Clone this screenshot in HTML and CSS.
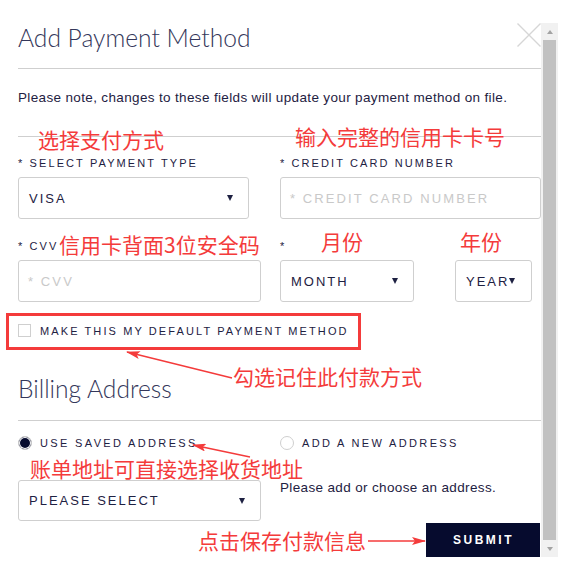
FILE: index.html
```html
<!DOCTYPE html>
<html lang="en">
<head>
<meta charset="utf-8">
<title>Add Payment Method</title>
<link rel="stylesheet" href="styles.css">
</head>
<body>
<div class="page">
  <div class="modal">
    <header class="modal-head">
      <h1 class="title">Add Payment Method</h1>
      <button class="close" aria-label="Close">
        <svg width="24" height="24" viewBox="0 0 24 24"><path d="M0.5 0.5 L23.5 23.5 M23.5 0.5 L0.5 23.5" stroke="#d6d6d6" stroke-width="1.4" fill="none"/></svg>
      </button>
    </header>
    <p class="note">Please note, changes to these fields will update your payment method on file.</p>

    <div class="grid fields">
      <div class="field">
        <div class="label">* SELECT PAYMENT TYPE</div>
        <div class="control select w-type"><span>VISA</span><span class="caret"></span></div>
      </div>
      <div class="field">
        <div class="label">* CREDIT CARD NUMBER</div>
        <div class="control placeholder">* CREDIT CARD NUMBER</div>
      </div>
      <div class="field">
        <div class="label">* CVV</div>
        <div class="control placeholder">* CVV</div>
      </div>
      <div class="field">
        <div class="label">*</div>
        <div class="exp">
          <div class="control select w-month"><span>MONTH</span><span class="caret"></span></div>
          <div class="control select w-year"><span>YEAR</span><span class="caret"></span></div>
        </div>
      </div>
    </div>

    <div class="check-row">
      <span class="checkbox"></span>
      <span class="opt-text">MAKE THIS MY DEFAULT PAYMENT METHOD</span>
    </div>

    <h2 class="title section-title">Billing Address</h2>

    <div class="grid radios">
      <div class="option"><span class="radio on"></span><span class="opt-text">USE SAVED ADDRESS</span></div>
      <div class="option"><span class="radio"></span><span class="opt-text">ADD A NEW ADDRESS</span></div>
    </div>

    <div class="grid address">
      <div class="control select"><span>PLEASE SELECT</span><span class="caret"></span></div>
      <p class="hint">Please add or choose an address.</p>
    </div>

    <div class="actions">
      <button class="submit">SUBMIT</button>
    </div>
  </div>

  <div class="scrollbar">
    <div class="sb-btn"><span class="sb-up"></span></div>
    <div class="sb-thumb"></div>
    <div class="sb-btn"><span class="sb-down"></span></div>
  </div>

  <div class="redbox"></div>
  <svg class="arrows" width="576" height="575" viewBox="0 0 576 575">
    <defs>
      <marker id="head" markerUnits="userSpaceOnUse" markerWidth="14" markerHeight="8" refX="13" refY="4" orient="auto">
        <path d="M0 0 L14 4 L0 8 L3 4 Z" fill="#f43b3b"/>
      </marker>
    </defs>
    <line x1="232" y1="378" x2="127" y2="352" stroke="#f43b3b" stroke-width="1.5" marker-end="url(#head)"/>
    <line x1="250" y1="457" x2="193" y2="445" stroke="#f43b3b" stroke-width="1.5" marker-end="url(#head)"/>
    <line x1="368" y1="541" x2="425" y2="541" stroke="#f43b3b" stroke-width="1.5" marker-end="url(#head)"/>
  </svg>

  <span class="annot a1">选择支付方式</span>
  <span class="annot a2">输入完整的信用卡卡号</span>
  <span class="annot a3">信用卡背面3位安全码</span>
  <span class="annot a4">月份</span>
  <span class="annot a5">年份</span>
  <span class="annot a6">勾选记住此付款方式</span>
  <span class="annot a7">账单地址可直接选择收货地址</span>
  <span class="annot a8">点击保存付款信息</span>
</div>
</body>
</html>
```

FILE: styles.css
```css
* { box-sizing: border-box; }
html, body { margin: 0; background: #fff; }
body {
  font-family: "Liberation Sans", Arial, sans-serif;
  color: #1e2142;
}
.page {
  position: relative;
  display: flex;
  align-items: flex-start;
  width: 576px;
  height: 575px;
  overflow: hidden;
}
.modal {
  width: 541px;
  padding-left: 18px;
}
.modal-head {
  display: flex;
  justify-content: space-between;
  align-items: flex-start;
  height: 69px;
  padding-top: 23px;
  border-bottom: 1px solid #cfcfcf;
}
.title {
  margin: 0;
  font-family: "Lato Light", Lato, "Open Sans", sans-serif;
  font-weight: 300;
  font-size: 24.6px;
  line-height: 30px;
  color: #34375a;
}
.close {
  display: block;
  width: 24px;
  height: 24px;
  padding: 0;
  border: 0;
  background: none;
}
.close svg { display: block; }
.note {
  margin: 0;
  padding: 21px 0 30px;
  font-size: 13.5px;
  letter-spacing: 0.35px;
  line-height: 16px;
  border-bottom: 1px solid #cfcfcf;
}
.grid {
  display: grid;
  grid-template-columns: 243px 261px;
  column-gap: 19px;
}
.fields {
  padding-top: 19px;
  row-gap: 20px;
}
.label {
  font-size: 11px;
  line-height: 14px;
  letter-spacing: 2.1px;
  margin-bottom: 7px;
  white-space: nowrap;
}
.control {
  height: 42px;
  border: 1px solid #cfcfcf;
  border-radius: 3px;
  display: flex;
  align-items: center;
  justify-content: space-between;
  padding: 0 15px 0 10px;
  font-size: 13px;
  letter-spacing: 2px;
  white-space: nowrap;
  background: #fff;
}
.placeholder {
  color: #c9c9c9;
  padding-left: 9px;
  letter-spacing: 2.1px;
}
.w-type { width: 231px; }
.exp {
  display: flex;
  justify-content: space-between;
  width: 252px;
}
.w-month { width: 134px; }
.w-year { width: 77px; padding-right: 0; justify-content: flex-start; }
.caret {
  flex: none;
  width: 0;
  height: 0;
  border-left: 3px solid transparent;
  border-right: 3px solid transparent;
  border-top: 6px solid #1e2142;
}
.check-row {
  display: flex;
  align-items: center;
  gap: 9px;
  height: 13px;
  margin-top: 22px;
}
.checkbox {
  width: 13px;
  height: 13px;
  border: 1px solid #cfcfcf;
  background: #fff;
}
.opt-text {
  font-size: 11px;
  line-height: 14px;
  letter-spacing: 2.1px;
  white-space: nowrap;
}
.option .opt-text { letter-spacing: 2.35px; }
.section-title {
  margin-top: 37px;
  padding-bottom: 16px;
  border-bottom: 1px solid #cfcfcf;
}
.radios {
  margin-top: 15px;
}
.option {
  display: flex;
  align-items: center;
  gap: 8px;
  height: 14px;
}
.radio {
  flex: none;
  width: 14px;
  height: 14px;
  border-radius: 50%;
  border: 1px solid #cfcfcf;
  background: #fff;
}
.radio.on {
  background: #060b2e;
  box-shadow: inset 0 0 0 1px #fff;
}
.address {
  margin-top: 30px;
}
.address .control { height: 41px; }
.hint {
  margin: 0;
  font-size: 13.5px;
  letter-spacing: 0.35px;
  line-height: 16px;
}
.actions {
  display: flex;
  justify-content: flex-end;
  margin-top: 2px;
  padding-right: 1px;
}
.submit {
  width: 114px;
  height: 34px;
  border: 0;
  background: #060b2e;
  color: #fff;
  font-family: "Liberation Sans", Arial, sans-serif;
  font-weight: bold;
  font-size: 12px;
  letter-spacing: 2.5px;
  padding: 0 0 0 1px;
}
.scrollbar {
  flex: none;
  width: 17px;
  height: 534px;
  margin-top: 23px;
  background: #f1f1f1;
  display: flex;
  flex-direction: column;
}
.sb-btn {
  height: 17px;
  display: flex;
  align-items: center;
  justify-content: center;
}
.sb-up {
  width: 0; height: 0;
  border-left: 3.5px solid transparent;
  border-right: 3.5px solid transparent;
  border-bottom: 4px solid #a3a3a3;
}
.sb-down {
  width: 0; height: 0;
  border-left: 3.5px solid transparent;
  border-right: 3.5px solid transparent;
  border-top: 4px solid #a3a3a3;
}
.sb-thumb {
  flex: 1;
  margin: 0 2px;
  background: #c1c1c1;
}
.redbox {
  position: absolute;
  left: 6px;
  top: 313px;
  width: 355px;
  height: 37px;
  border: 3px solid #f43b3b;
}
.arrows {
  position: absolute;
  left: 0;
  top: 0;
  pointer-events: none;
}
.annot {
  position: absolute;
  font-family: "Noto Sans CJK SC", sans-serif;
  font-size: 21px;
  line-height: 21px;
  color: #f43b3b;
  white-space: nowrap;
}
.a1 { left: 38px; top: 129px; }
.a2 { left: 295px; top: 126px; }
.a3 { left: 59px; top: 234px; }
.a4 { left: 321px; top: 231px; }
.a5 { left: 460px; top: 231px; }
.a6 { left: 233px; top: 366px; }
.a7 { left: 30px; top: 458px; }
.a8 { left: 198px; top: 530px; }
```
